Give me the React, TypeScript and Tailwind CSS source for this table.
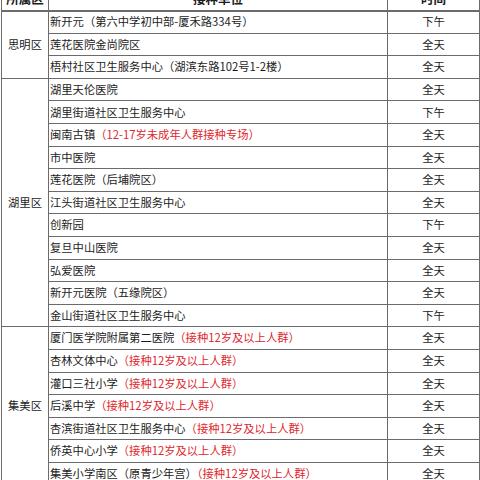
const font = { fontFamily: '"Noto Sans CJK SC", "Noto Sans", sans-serif' };

type Row = { name: string; note?: string; time: string };

const groups: { district: string; rows: Row[] }[] = [
  {
    district: "思明区",
    rows: [
      { name: "新开元（第六中学初中部-厦禾路334号）", time: "下午" },
      { name: "莲花医院金尚院区", time: "全天" },
      { name: "梧村社区卫生服务中心（湖滨东路102号1-2楼）", time: "全天" },
    ],
  },
  {
    district: "湖里区",
    rows: [
      { name: "湖里天伦医院", time: "全天" },
      { name: "湖里街道社区卫生服务中心", time: "下午" },
      { name: "闽南古镇", note: "（12-17岁未成年人群接种专场）", time: "全天" },
      { name: "市中医院", time: "全天" },
      { name: "莲花医院（后埔院区）", time: "全天" },
      { name: "江头街道社区卫生服务中心", time: "全天" },
      { name: "创新园", time: "下午" },
      { name: "复旦中山医院", time: "全天" },
      { name: "弘爱医院", time: "全天" },
      { name: "新开元医院（五缘院区）", time: "全天" },
      { name: "金山街道社区卫生服务中心", time: "下午" },
    ],
  },
  {
    district: "集美区",
    rows: [
      { name: "厦门医学院附属第二医院", note: "（接种12岁及以上人群）", time: "全天" },
      { name: "杏林文体中心", note: "（接种12岁及以上人群）", time: "全天" },
      { name: "灌口三社小学", note: "（接种12岁及以上人群）", time: "全天" },
      { name: "后溪中学", note: "（接种12岁及以上人群）", time: "全天" },
      { name: "杏滨街道社区卫生服务中心", note: "（接种12岁及以上人群）", time: "全天" },
      { name: "侨英中心小学", note: "（接种12岁及以上人群）", time: "全天" },
      { name: "集美小学南区（原青少年宫）", note: "（接种12岁及以上人群）", time: "全天" },
    ],
  },
];

export default function App() {
  return (
    <div className="w-[480px] h-[480px] overflow-hidden bg-white" style={font}>
      <table className="mt-[-12.6px] ml-[1px] w-[478px] table-fixed border-collapse text-[11.3px] leading-none text-[#1c1c1c]">
        <colgroup>
          <col className="w-[47px]" />
          <col className="w-[339px]" />
          <col className="w-[92px]" />
        </colgroup>
        <thead>
          <tr className="h-[22.6px]">
            <th className="border border-[#6b6b6b] border-b-2 text-[12.5px] font-bold">所属区</th>
            <th className="border border-[#6b6b6b] border-b-2 text-[12.5px] font-bold">接种单位</th>
            <th className="border border-[#6b6b6b] border-b-2 text-[12.5px] font-bold">时间</th>
          </tr>
        </thead>
        <tbody>
          {groups.map((g) =>
            g.rows.map((r, i) => (
              <tr key={g.district + r.name} className="h-[22.6px]">
                {i === 0 && (
                  <td rowSpan={g.rows.length} className="border border-[#6b6b6b] text-center align-middle">
                    {g.district}
                  </td>
                )}
                <td className="border border-[#6b6b6b] pl-[1px] whitespace-nowrap overflow-hidden">
                  {r.name}
                  {r.note && <span className="text-[#e0262b]">{r.note}</span>}
                </td>
                <td className="border border-[#6b6b6b] text-center">{r.time}</td>
              </tr>
            ))
          )}
        </tbody>
      </table>
    </div>
  );
}
